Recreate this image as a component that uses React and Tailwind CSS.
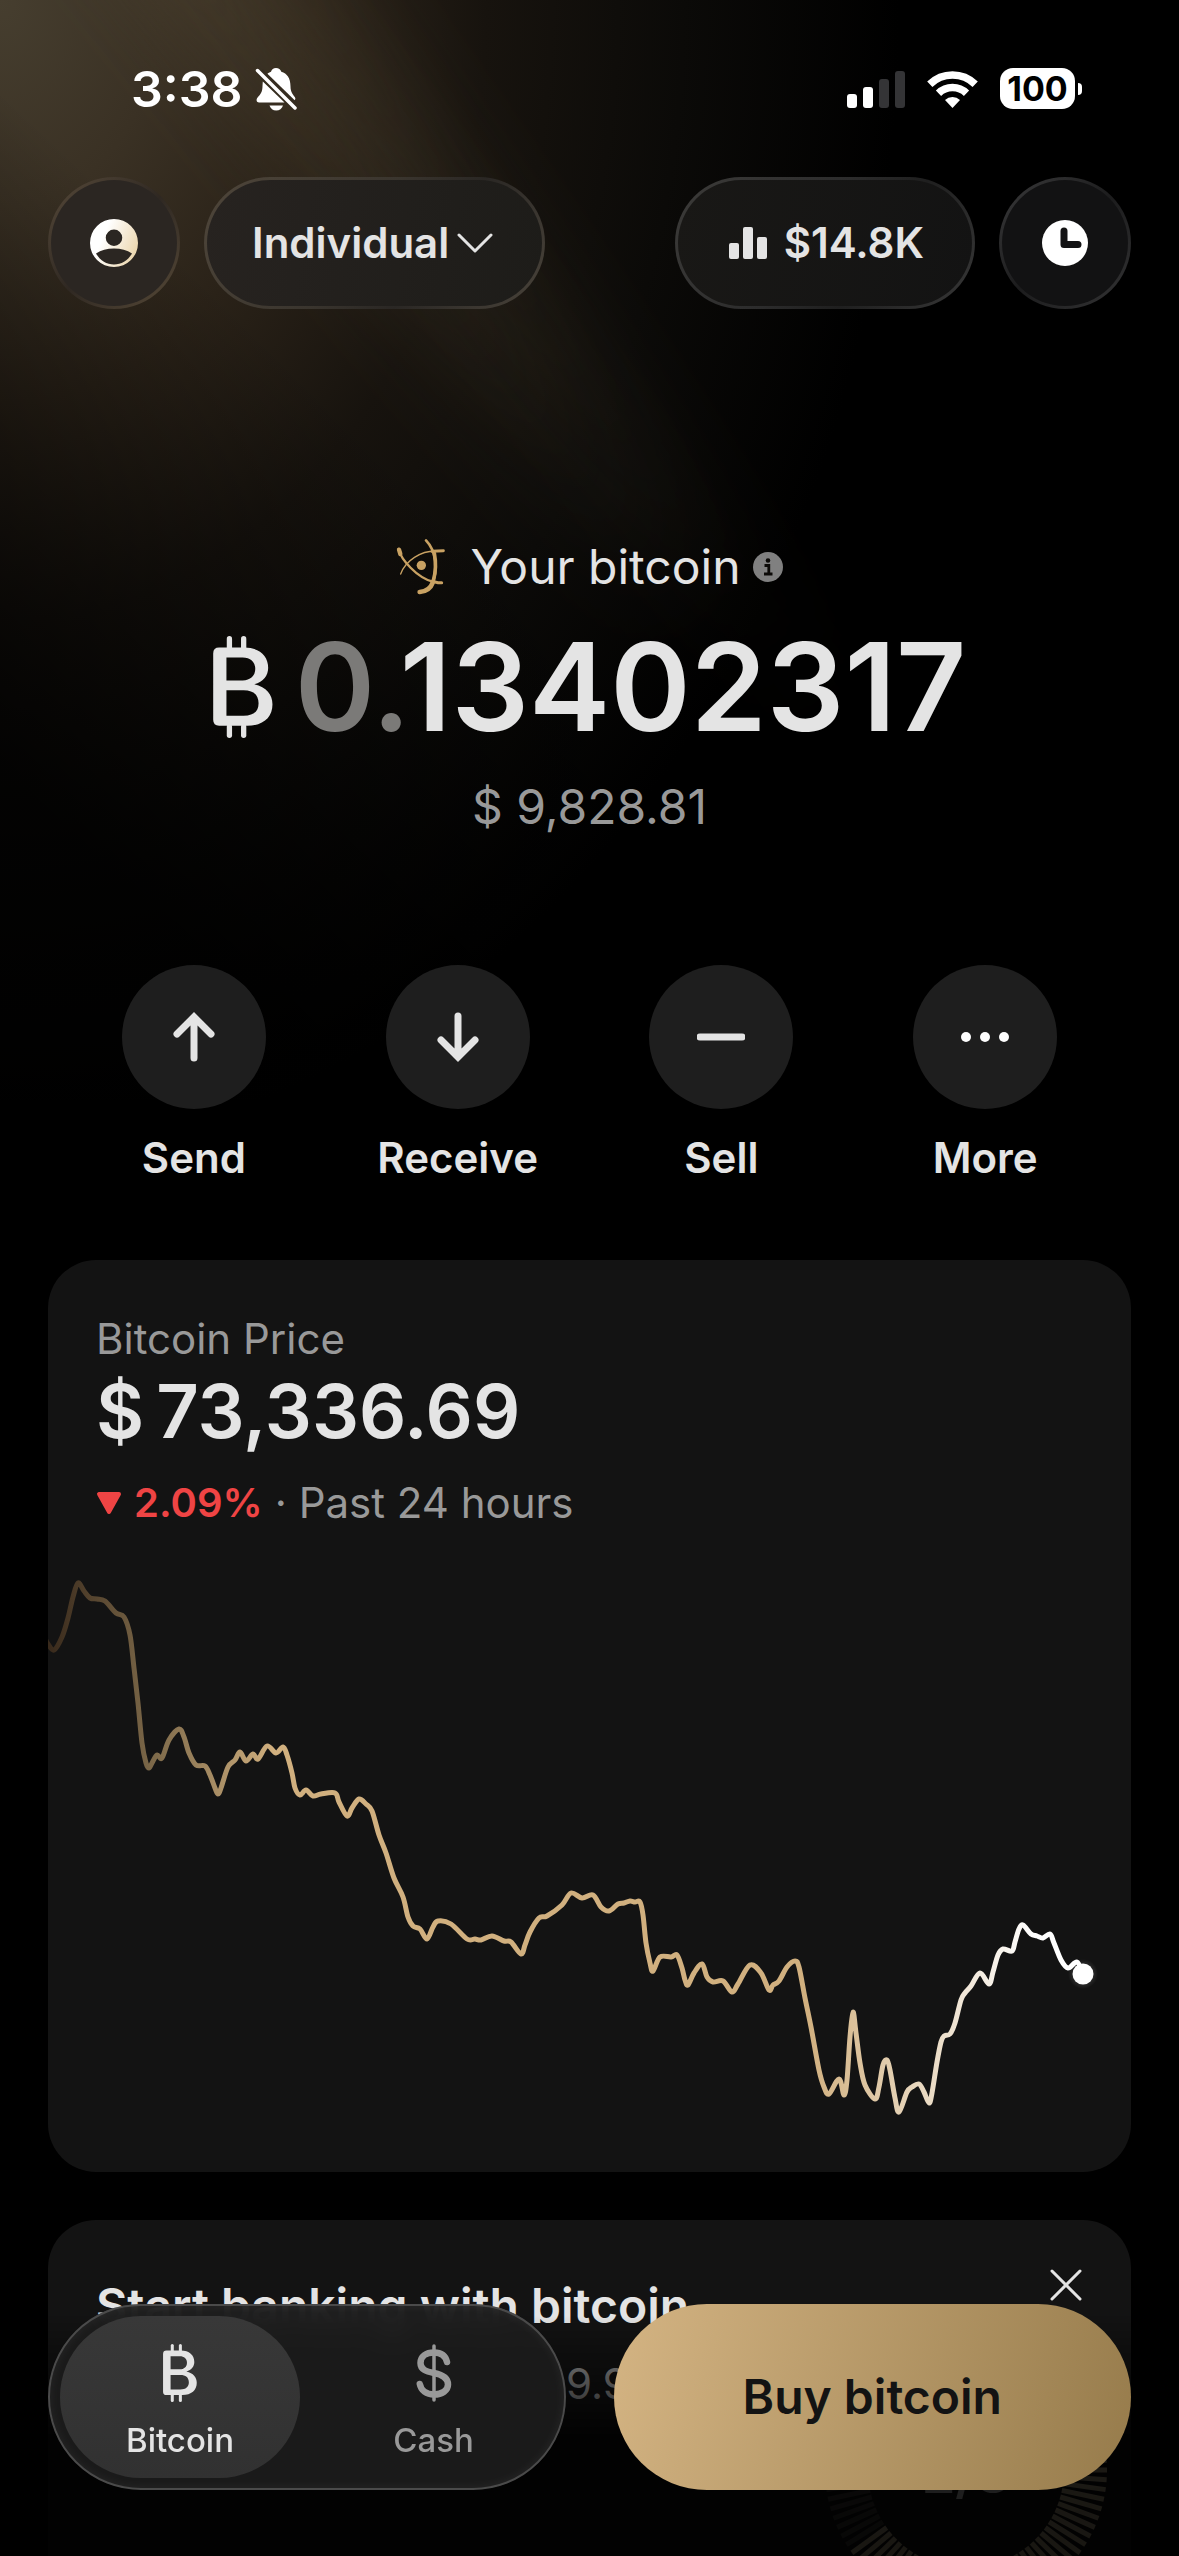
import React, { useState } from 'react';
import { clsx } from 'clsx';

// [x, y] samples of the 24h price line, in chart units (1083 x 612)
const PRICE_POINTS = [
  [-3, 78], [0, 84], [6, 90], [14, 77], [20, 58], [25, 37], [30, 23], [36, 31], [42, 38], [49, 39],
  [57, 41], [68, 53], [76, 57], [82, 75], [86, 108], [90, 143], [94, 183], [98, 203], [101, 208],
  [104, 203], [109, 195], [114, 198], [121, 180], [131, 169], [136, 177], [141, 193], [148, 205],
  [157, 206], [162, 215], [167, 228], [170, 234], [173, 228], [180, 207], [187, 200], [192, 192],
  [198, 201], [205, 194], [210, 199], [219, 186], [228, 193], [235, 187], [239, 195], [244, 213],
  [247, 228], [252, 235], [258, 230], [265, 236], [273, 234], [287, 233], [291, 242], [299, 256],
  [304, 248], [311, 239], [318, 244], [324, 251], [331, 275], [338, 293], [346, 318], [355, 337],
  [360, 357], [365, 366], [372, 369], [379, 379], [385, 367], [390, 361], [403, 364], [419, 379],
  [427, 379], [433, 380], [444, 376], [456, 381], [463, 382], [473, 394], [477, 385], [482, 372],
  [491, 358], [499, 356], [514, 345], [523, 333], [534, 338], [545, 335], [553, 347], [561, 351],
  [570, 344], [576, 343], [582, 341], [587, 342], [592, 342], [595, 355], [598, 383], [602, 403],
  [605, 411], [612, 397], [623, 397], [629, 395], [634, 408], [637, 420], [640, 425], [646, 413],
  [654, 404], [659, 417], [665, 422], [675, 421], [684, 432], [690, 424], [702, 405], [713, 413],
  [721, 430], [725, 425], [731, 421], [739, 407], [747, 401], [751, 407], [757, 438], [763, 467],
  [771, 510], [776, 527], [781, 534], [791, 519], [796, 535], [799, 520], [802, 477], [805, 452],
  [808, 473], [812, 503], [817, 525], [827, 539], [831, 527], [835, 505], [839, 500], [842, 510],
  [847, 538], [851, 552], [859, 532], [864, 527], [871, 524], [876, 532], [881, 543], [884, 533],
  [889, 502], [893, 482], [896, 476], [902, 474], [907, 463], [913, 440], [917, 433], [923, 426],
  [932, 413], [941, 424], [945, 412], [950, 395], [955, 389], [964, 391], [967, 382], [971, 369],
  [975, 365], [983, 374], [989, 376], [995, 378], [1002, 374], [1006, 383], [1013, 400],
  [1020, 408], [1029, 402], [1035, 414],
];

function smoothPath(points) {
  let d = `M${points[0][0]} ${points[0][1]}`;
  for (let i = 0; i < points.length - 1; i++) {
    const p0 = points[i - 1] || points[i];
    const p1 = points[i];
    const p2 = points[i + 1];
    const p3 = points[i + 2] || p2;
    const c1 = [p1[0] + (p2[0] - p0[0]) / 6, p1[1] + (p2[1] - p0[1]) / 6];
    const c2 = [p2[0] - (p3[0] - p1[0]) / 6, p2[1] - (p3[1] - p1[1]) / 6];
    d += ` C${c1[0]} ${c1[1]} ${c2[0]} ${c2[1]} ${p2[0]} ${p2[1]}`;
  }
  return d;
}

/* ---------- Icons ---------- */

function BitcoinIcon({ className }) {
  return (
    <svg viewBox="46 44 180 308" fill="currentColor" className={className} aria-hidden="true">
      <path
        fillRule="evenodd"
        d="M64 79H140C185 79 212 103 212 140C212 163 198 182 170 190C207 198 225 222 225 250C225 290 197 315 148 315H64Q46 315 46 297V97Q46 79 64 79ZM86 109V178H135C158 178 173 165 173 143C173 122 158 109 135 109ZM86 208V285H138C167 285 183 272 183 247C183 221 166 208 138 208Z"
      />
      <rect x="87" y="44" width="16" height="42" rx="8" />
      <rect x="130" y="44" width="16" height="42" rx="8" />
      <rect x="87" y="310" width="16" height="42" rx="8" />
      <rect x="130" y="310" width="16" height="42" rx="8" />
    </svg>
  );
}

function DollarIcon({ className }) {
  return (
    <svg viewBox="0 0 36 58" fill="none" stroke="currentColor" strokeLinecap="round" className={className} aria-hidden="true">
      <path d="M18 2V56" strokeWidth="3.5" />
      <path
        d="M31 18C29.500 11.500 24.500 8.500 18 8.500C10 8.500 4.500 12.500 4.500 19C4.500 25.500 10 27.500 18 29C26.500 30.700 32 33.500 32 40.500C32 46.500 26 50.500 18 50.500C10.500 50.500 5 46.500 3.800 40"
        strokeWidth="6.500"
      />
    </svg>
  );
}

function BellOffIcon() {
  return (
    <svg viewBox="0 0 42 44" className="h-11 w-[42px]" aria-hidden="true">
      <g fill="#fff">
        <path d="M21 1C18.500 1 16.500 2.500 16 4.800C13.700 5.600 12 7 10.700 8.700L38.500 33.500C40.300 33.500 41 31.500 39.800 30C37.500 27 35.500 24.500 35.500 19.500C35.500 11 32 6.500 26.300 4.800C25.700 2.500 23.500 1 21 1Z" />
        <path d="M7.800 14.500L29.500 35.500H4C1.500 35.500 0.800 32.500 2.600 30.500C5.500 27.200 7.500 25 7.500 19Z" />
        <path d="M14.500 38.500H28C27 41.500 24.500 43.500 21.200 43.500C18 43.500 15.500 41.500 14.500 38.500Z" />
      </g>
      <path d="M5 5L42 41" stroke="#352c20" strokeWidth="8" />
      <path d="M2.500 3.500L40 41" stroke="#fff" strokeWidth="3.500" strokeLinecap="round" />
    </svg>
  );
}

function SignalIcon() {
  return (
    <svg viewBox="0 0 58 38" className="h-[38px] w-[58px]" aria-hidden="true">
      <rect x="0" y="24" width="10" height="14" rx="3" fill="#fff" />
      <rect x="16" y="17" width="10" height="21" rx="3" fill="#fff" />
      <rect x="32" y="9" width="10" height="29" rx="3" fill="#343436" />
      <rect x="48" y="1" width="10" height="37" rx="3" fill="#343436" />
    </svg>
  );
}

function WifiIcon() {
  return (
    <svg viewBox="0 0 51 38" className="h-[38px] w-[51px]" fill="none" stroke="#fff" strokeWidth="7.500" aria-hidden="true">
      <path d="M2.800 14.200A32.500 32.500 0 0 1 48.200 14.200" />
      <path d="M11.500 23.200A20 20 0 0 1 39.500 23.200" />
      <path d="M25.500 38L18 30A11 11 0 0 1 33 30Z" fill="#fff" stroke="none" />
    </svg>
  );
}

function ProfileIcon() {
  return (
    <svg viewBox="0 0 48 48" className="size-12" aria-hidden="true">
      <defs>
        <linearGradient id="profile" x1="0.3" y1="0.3" x2="1" y2="0.6">
          <stop offset="0" stopColor="#fff" />
          <stop offset="1" stopColor="#ecd7b0" />
        </linearGradient>
      </defs>
      <path
        fill="url(#profile)"
        fillRule="evenodd"
        d="M24 0A24 24 0 1 1 24 48A24 24 0 1 1 24 0ZM24 10.500A8.200 8.200 0 1 0 24 27A8.200 8.200 0 1 0 24 10.500ZM6 34.500C10 41.500 16.500 45.500 24 45.500C31.500 45.500 38 41.500 42 34.500C37 31 31 29.500 24 29.500C17 29.500 11 31 6 34.500Z"
      />
    </svg>
  );
}

function ClockIcon() {
  return (
    <svg viewBox="0 0 46 46" className="size-[46px]" aria-hidden="true">
      <circle cx="23" cy="23" r="23" fill="#fff" />
      <path d="M22 11V24.500H36" fill="none" stroke="#131314" strokeWidth="7" strokeLinecap="round" strokeLinejoin="round" />
    </svg>
  );
}

function OrbitLogo() {
  return (
    <svg viewBox="30 24 150 174" className="h-[58px] w-[50px]" fill="none" stroke="#c9a263" strokeLinecap="round" aria-hidden="true">
      <path d="M39 60C45 88 92 142 140 155" strokeWidth="7" />
      <path d="M39 59L43 72" strokeWidth="13" />
      <path d="M138 154L156 158L167 158" strokeWidth="9" />
      <path d="M44 132C58 92 105 62 150 63" strokeWidth="4" />
      <path d="M138 64L172 62" strokeWidth="9" />
      <path d="M120 31C152 64 156 120 138 164" strokeWidth="8" />
      <path d="M145 70C151 100 148 130 142 152" strokeWidth="11" />
      <path d="M140 158C133 178 120 184 101 186" strokeWidth="14" />
      <circle cx="106" cy="106" r="14" fill="#c9a263" stroke="none" />
    </svg>
  );
}

function InfoIcon() {
  return (
    <svg viewBox="0 0 30 30" className="size-[30px]" aria-hidden="true">
      <circle cx="15" cy="15" r="15" fill="#808080" />
      <circle cx="15" cy="8.500" r="2.300" fill="#0c0a08" />
      <path d="M11.500 13.500H15.800V22M11 22H19.500" fill="none" stroke="#0c0a08" strokeWidth="2.800" />
    </svg>
  );
}

const ACTIONS = [
  {
    label: 'Send',
    icon: <path d="M24 46V6M7 22L24 5L41 22" />,
  },
  {
    label: 'Receive',
    icon: <path d="M24 4V44M7 28L24 45L41 28" />,
  },
  { label: 'Sell', icon: <path d="M3 25H45" /> },
  {
    label: 'More',
    icon: (
      <g fill="#fff" stroke="none">
        <circle cx="5" cy="25" r="5" />
        <circle cx="24" cy="25" r="5" />
        <circle cx="43" cy="25" r="5" />
      </g>
    ),
  },
];

/* ---------- Sections ---------- */

function GlowBackground() {
  return (
    <div className="pointer-events-none absolute inset-x-0 top-0 -z-10 h-[1100px] overflow-hidden">
      <div className="absolute inset-0 bg-[radial-gradient(ellipse_900px_1150px_at_0px_0px,#463e2f_0%,#3a3124_18%,#2a2218_35%,#17130e_54%,#0b0a08_76%,#000_100%)]" />
      {/* light beams */}
      <div className="absolute -top-40 left-10 h-[1000px] w-24 origin-top -rotate-[38deg] bg-linear-to-b from-[#5a4e38]/40 to-transparent blur-2xl" />
      <div className="absolute -top-40 left-40 h-[1100px] w-16 origin-top -rotate-[36deg] bg-linear-to-b from-[#5a4e38]/30 to-transparent blur-2xl" />
      <div className="absolute inset-0 bg-[linear-gradient(to_top_right,rgba(0,0,0,0.8)_15%,transparent_46%)]" />
    </div>
  );
}

function StatusBar() {
  return (
    <div className="flex h-[177px] items-center justify-between pr-[97px] pl-[131px]">
      <div className="flex items-center gap-3">
        <span className="text-[50px] leading-none font-semibold text-white">3:38</span>
        <BellOffIcon />
      </div>
      <div className="flex items-center">
        <SignalIcon />
        <span className="ml-[22px] flex">
          <WifiIcon />
        </span>
        <span className="ml-[22px] flex h-[41px] w-[75px] items-center justify-center rounded-[13px] bg-white text-[34px] leading-none font-bold text-black">
          100
        </span>
        <span className="ml-[3px] h-3 w-1 rounded-r-full bg-white" />
      </div>
    </div>
  );
}

function TopBar() {
  return (
    <header className="flex justify-between px-12">
      <div className="flex gap-6">
        <button
          aria-label="Profile"
          className="flex size-[132px] items-center justify-center rounded-full border-3 border-transparent [background:linear-gradient(#2b2622,#2b2622)_padding-box,linear-gradient(135deg,#574a3a,#2f2822_50%,#574a38)_border-box]"
        >
          <ProfileIcon />
        </button>
        <button className="flex h-[132px] items-center gap-2 rounded-full border-3 border-transparent pr-[49px] pl-[45px] [background:linear-gradient(100deg,#272320,#1d1c19)_padding-box,linear-gradient(125deg,#4f463a,#3a352e_45%,#2a2724_65%,#4a443b)_border-box]">
          <span className="text-[42px] leading-[48px] font-semibold">Individual</span>
          <svg viewBox="0 0 36 24" className="h-6 w-9" fill="none" stroke="#e4e4e4" strokeWidth="3" strokeLinecap="round" strokeLinejoin="round">
            <path d="M2 4L18 20L34 4" />
          </svg>
        </button>
      </div>
      <div className="flex gap-6">
        <button className="flex h-[132px] items-center gap-4 rounded-full border-3 border-transparent pr-12 pl-[51px] [background:linear-gradient(100deg,#191816,#131313)_padding-box,linear-gradient(125deg,#3c3b39,#2c2c2c_45%,#1f1f1f_65%,#383838)_border-box]">
          <svg viewBox="0 0 39 32" className="h-8 w-[39px]" fill="#e4e4e4">
            <rect x="0" y="16" width="10" height="16" rx="2" />
            <rect x="14" y="0" width="10" height="32" rx="2" />
            <rect x="28" y="10" width="10" height="22" rx="2" />
          </svg>
          <span className="text-[42px] leading-[48px] font-semibold">$14.8K</span>
        </button>
        <button
          aria-label="Activity"
          className="flex size-[132px] items-center justify-center rounded-full border-3 border-transparent [background:linear-gradient(#121213,#121213)_padding-box,linear-gradient(135deg,#3a3a3b,#1c1c1d_50%,#343435)_border-box]"
        >
          <ClockIcon />
        </button>
      </div>
    </header>
  );
}

function Balance() {
  return (
    <section className="mt-[228px] flex flex-col items-center">
      <div className="flex h-[60px] items-center">
        <OrbitLogo />
        <h1 className="ml-6 text-[48px] leading-[60px]">Your bitcoin</h1>
        <button aria-label="About your balance" className="ml-3">
          <InfoIcon />
        </button>
      </div>
      <div className="mt-[30px] flex h-[120px] items-center gap-[22px]">
        <BitcoinIcon className="h-[102px] w-[60px]" />
        <p className="text-[122px] leading-[120px] font-semibold">
          <span className="text-[#7b7a78]">0.</span>13402317
        </p>
      </div>
      <p className="mt-[30px] text-[48px] leading-[60px] text-[#999]">$ 9,828.81</p>
    </section>
  );
}

function Actions() {
  return (
    <nav className="mt-32 grid grid-cols-4 px-[62px]">
      {ACTIONS.map(({ label, icon }) => (
        <button key={label} className="flex flex-col items-center gap-[25px]">
          <span className="flex size-36 items-center justify-center rounded-full bg-[#1e1e1e]">
            <svg viewBox="0 0 48 50" className="h-[50px] w-12" fill="none" stroke="#e4e4e4" strokeWidth="7" strokeLinecap="round">
              {icon}
            </svg>
          </span>
          <span className="text-[42px] leading-[48px] font-semibold">{label}</span>
        </button>
      ))}
    </nav>
  );
}

function PriceCard() {
  return (
    <section className="mx-12 mt-[78px] overflow-hidden rounded-[48px] bg-[#131313]">
      <div className="px-12 pt-[55px]">
        <h2 className="text-[42px] leading-[48px] text-[#999]">Bitcoin Price</h2>
        <p className="mt-3 flex gap-3 text-[74px] leading-[72px] font-semibold">
          <span>$</span>
          <span>73,336.69</span>
        </p>
        <p className="mt-8 flex items-center gap-3 text-[42px] leading-[48px]">
          <svg viewBox="0 0 26 24" className="h-6 w-[26px]" fill="#ef4444" stroke="#ef4444" strokeWidth="4" strokeLinejoin="round">
            <path d="M3 3H23L13 21Z" />
          </svg>
          <span className="text-[40px] font-semibold text-[#ef4444]">2.09%</span>
          <span className="text-[#999]">· Past 24 hours</span>
        </p>
      </div>
      <svg viewBox="0 0 1083 612" className="mt-[33px] block w-full" fill="none">
        <defs>
          <linearGradient id="line" gradientUnits="userSpaceOnUse" x1="0" y1="0" x2="1083" y2="0">
            <stop offset="0" stopColor="#38291b" />
            <stop offset="0.1" stopColor="#7f6b4b" />
            <stop offset="0.21" stopColor="#d1b07f" />
            <stop offset="0.7" stopColor="#d1b07f" />
            <stop offset="0.91" stopColor="#fff" />
          </linearGradient>
          <radialGradient id="halo">
            <stop offset="0.6" stopColor="#fff" stopOpacity="0.12" />
            <stop offset="1" stopColor="#fff" stopOpacity="0" />
          </radialGradient>
        </defs>
        <path d={smoothPath(PRICE_POINTS)} stroke="url(#line)" strokeWidth="5" strokeLinejoin="round" />
        <circle cx="1035" cy="414" r="15" fill="url(#halo)" />
        <circle cx="1035" cy="414" r="10.500" fill="#fff" />
      </svg>
    </section>
  );
}

function ProgressRing() {
  const ticks = Array.from({ length: 90 }, (_, i) => i * 4);
  return (
    <div className="grid place-items-center">
      <svg viewBox="-141 -141 282 282" className="col-start-1 row-start-1 size-[282px]">
        {ticks.map((angle) => (
          <path
            key={angle}
            d="M98 0H141"
            transform={`rotate(${angle})`}
            stroke={angle > 144 && angle < 270 ? '#44423e' : '#c9b896'}
            strokeWidth="5"
          />
        ))}
      </svg>
      <span className="col-start-1 row-start-1 pt-2 text-[54px] leading-[60px] font-semibold">2/8</span>
    </div>
  );
}

function BankingCard() {
  return (
    <section className="mx-12 mt-12 flex justify-between rounded-[48px] bg-[#131313] pr-6 pl-12">
      <div className="pt-14">
        <h2 className="text-[48px] leading-[60px] font-semibold">Start banking with bitcoin</h2>
        <p className="mt-6 pl-[470px] text-[42px] leading-[48px] text-[#999]">9.9</p>
      </div>
      <div className="flex flex-col pt-12">
        <button aria-label="Dismiss" className="mr-6 self-end">
          <svg viewBox="0 0 34 34" className="size-[34px]" stroke="#e4e4e4" strokeWidth="3" strokeLinecap="round">
            <path d="M3 3L31 31M31 3L3 31" />
          </svg>
        </button>
        <div className="mt-[27px]">
          <ProgressRing />
        </div>
      </div>
    </section>
  );
}

function BottomBar() {
  const [tab, setTab] = useState('Bitcoin');
  const tabs = [
    { name: 'Bitcoin', Icon: BitcoinIcon },
    { name: 'Cash', Icon: DollarIcon },
  ];

  return (
    <div className="fixed inset-x-0 bottom-0">
      <div className="pointer-events-none absolute inset-x-0 bottom-0 h-[240px] bg-linear-to-b from-transparent via-black/86 via-50% to-black/88" />
      <div className="relative grid grid-cols-2 gap-12 px-12 pb-[66px]">
        <div className="flex h-[186px] justify-between rounded-full border-2 border-[#4a4a4a] bg-[#1c1c1c]/94 p-[10px] shadow-[inset_0_0_12px_rgba(255,255,255,0.06)] backdrop-blur-md">
          {tabs.map(({ name, Icon }) => (
            <button
              key={name}
              onClick={() => setTab(name)}
              className={clsx(
                'flex w-60 flex-col items-center rounded-full pt-7',
                tab === name ? 'bg-linear-to-b from-[#383838] to-[#313131] text-[#e4e4e4]' : 'text-[#999]'
              )}
            >
              <Icon className="h-[58px] w-9" />
              <span className="mt-[18px] text-[33px] leading-10 font-medium">{name}</span>
            </button>
          ))}
        </div>
        <button className="h-[186px] rounded-full bg-[linear-gradient(105deg,#d4b483,#967b4b)] text-[48px] leading-[60px] font-semibold text-[#131313]">
          Buy bitcoin
        </button>
      </div>
    </div>
  );
}

export default function App() {
  return (
    <div className="h-screen bg-black font-['Inter',sans-serif] text-[#e4e4e4]">
      <main className="relative isolate h-full overflow-x-hidden overflow-y-auto [scrollbar-width:none]">
        <GlowBackground />
        <StatusBar />
        <TopBar />
        <Balance />
        <Actions />
        <PriceCard />
        <BankingCard />
      </main>
      <BottomBar />
    </div>
  );
}
